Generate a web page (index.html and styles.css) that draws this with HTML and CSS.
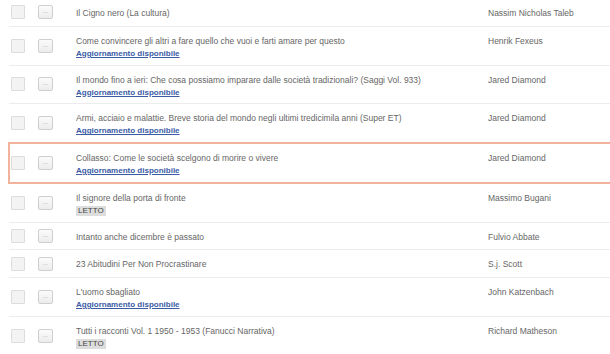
FILE: index.html
```html
<!DOCTYPE html>
<html lang="it">
<head>
<meta charset="utf-8">
<title>Libri</title>
<link rel="stylesheet" href="styles.css">
</head>
<body>
<div class="list">
  <div class="row first">
    <div class="sel"><span class="cb"></span></div>
    <div class="act"><span class="btn">...</span></div>
    <div class="info"><div class="title">Il Cigno nero (La cultura)</div></div>
    <div class="author">Nassim Nicholas Taleb</div>
  </div>
  <div class="row">
    <div class="sel"><span class="cb"></span></div>
    <div class="act"><span class="btn">...</span></div>
    <div class="info"><div class="title">Come convincere gli altri a fare quello che vuoi e farti amare per questo</div><a class="upd" href="#">Aggiornamento disponibile</a></div>
    <div class="author">Henrik Fexeus</div>
  </div>
  <div class="row">
    <div class="sel"><span class="cb"></span></div>
    <div class="act"><span class="btn">...</span></div>
    <div class="info"><div class="title">Il mondo fino a ieri: Che cosa possiamo imparare dalle società tradizionali? (Saggi Vol. 933)</div><a class="upd" href="#">Aggiornamento disponibile</a></div>
    <div class="author">Jared Diamond</div>
  </div>
  <div class="row">
    <div class="sel"><span class="cb"></span></div>
    <div class="act"><span class="btn">...</span></div>
    <div class="info"><div class="title">Armi, acciaio e malattie. Breve storia del mondo negli ultimi tredicimila anni (Super ET)</div><a class="upd" href="#">Aggiornamento disponibile</a></div>
    <div class="author">Jared Diamond</div>
  </div>
  <div class="row active">
    <div class="sel"><span class="cb"></span></div>
    <div class="act"><span class="btn">...</span></div>
    <div class="info"><div class="title">Collasso: Come le società scelgono di morire o vivere</div><a class="upd" href="#">Aggiornamento disponibile</a></div>
    <div class="author">Jared Diamond</div>
  </div>
  <div class="row">
    <div class="sel"><span class="cb"></span></div>
    <div class="act"><span class="btn">...</span></div>
    <div class="info"><div class="title">Il signore della porta di fronte</div><span class="read">LETTO</span></div>
    <div class="author">Massimo Bugani</div>
  </div>
  <div class="row">
    <div class="sel"><span class="cb"></span></div>
    <div class="act"><span class="btn">...</span></div>
    <div class="info"><div class="title">Intanto anche dicembre è passato</div></div>
    <div class="author">Fulvio Abbate</div>
  </div>
  <div class="row">
    <div class="sel"><span class="cb"></span></div>
    <div class="act"><span class="btn">...</span></div>
    <div class="info"><div class="title">23 Abitudini Per Non Procrastinare</div></div>
    <div class="author">S.j. Scott</div>
  </div>
  <div class="row">
    <div class="sel"><span class="cb"></span></div>
    <div class="act"><span class="btn">...</span></div>
    <div class="info"><div class="title">L'uomo sbagliato</div><a class="upd" href="#">Aggiornamento disponibile</a></div>
    <div class="author">John Katzenbach</div>
  </div>
  <div class="row">
    <div class="sel"><span class="cb"></span></div>
    <div class="act"><span class="btn">...</span></div>
    <div class="info"><div class="title">Tutti i racconti Vol. 1 1950 - 1953 (Fanucci Narrativa)</div><span class="read">LETTO</span></div>
    <div class="author">Richard Matheson</div>
  </div>
</div>
</body>
</html>
```
FILE: styles.css
```css
html, body {
  margin: 0;
  padding: 0;
  background: #ffffff;
}
body {
  font-family: "Liberation Sans", Arial, sans-serif;
  font-size: 8.5px;
  color: #666666;
  overflow: hidden;
}
.list {
  padding-left: 8px;
  margin-top: -1px;
}
.row {
  display: flex;
  align-items: stretch;
  border-bottom: 1px solid #ececec;
  border-left: 2px solid transparent;
}
.row.active {
  border: 2px solid #f2b39a;
  border-right: none;
  margin-top: -1px;
}
.sel {
  width: 27px;
  display: flex;
  align-items: center;
  padding-left: 1px;
}
.cb {
  width: 12px;
  height: 12px;
  border: 1px solid #dcdcdc;
  background: #f3f3f3;
  border-radius: 1px;
}
.act {
  width: 38px;
  display: flex;
  align-items: center;
}
.btn {
  width: 13px;
  height: 12px;
  border: 1px solid #cfcfcf;
  background: linear-gradient(#fbfbfb, #ececec);
  border-radius: 2px;
  font-size: 6px;
  line-height: 10px;
  color: #999;
  text-align: center;
}
.info {
  width: 412px;
  padding: 8px 0 5.75px 0;
}
.title {
  line-height: 13px;
  white-space: nowrap;
}
.upd {
  display: block;
  line-height: 11px;
  color: #3b5ba5;
  font-weight: bold;
  text-decoration: underline;
  font-size: 8px;
}
.read {
  display: inline-block;
  margin-top: 1px;
  background: #dddddd;
  color: #444;
  font-size: 8px;
  line-height: 10px;
  padding: 0 2px;
}
.author {
  padding-top: 8px;
  line-height: 13px;
}
```
